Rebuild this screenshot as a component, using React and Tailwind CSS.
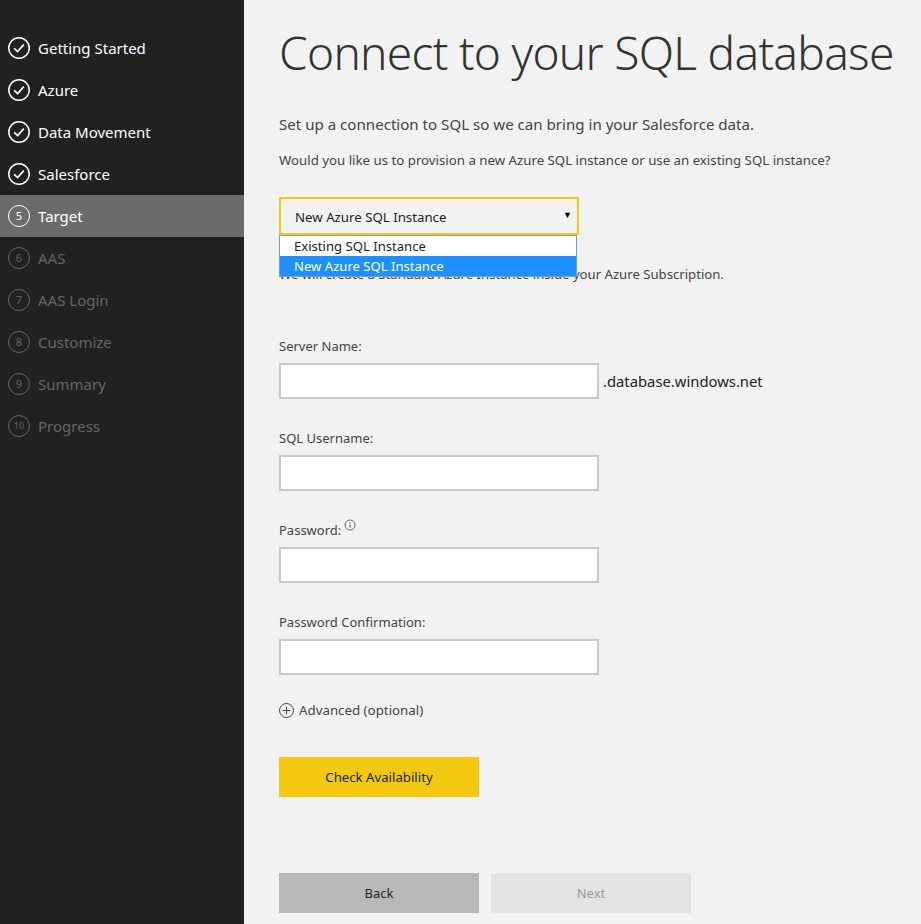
import { useState } from "react";

const DONE = ["Getting Started", "Azure", "Data Movement", "Salesforce"];
const TODO = ["AAS", "AAS Login", "Customize", "Summary", "Progress"];

function Check() {
  return (
    <svg width="22" height="22" viewBox="0 0 22 22" fill="none" stroke="white" className="shrink-0">
      <circle cx="11" cy="11" r="10.2" strokeWidth="1.5" />
      <path d="M6.2 11.4l3.4 3.2 6.2-7" strokeWidth="1.7" />
    </svg>
  );
}

function Step({ num, label, active, off }) {
  return (
    <div className={"h-[42px] pl-2 flex items-center gap-2 text-[15px] " + (active ? "bg-[#6b6b6b] text-white" : off ? "text-[#666666]" : "text-white")}>
      {num ? (
        <span className={"w-[22px] h-[22px] shrink-0 rounded-full border-[1.5px] flex items-center justify-center " + (num === 10 ? "text-[9px] " : "text-[11px] ") + (off ? "border-[#666666]" : "border-white")}>
          {num}
        </span>
      ) : (
        <Check />
      )}
      <span>{label}</span>
    </div>
  );
}

function Field({ label, info, children }) {
  return (
    <div>
      <div className="h-[20px] flex items-center text-[13px] text-[#444444] mb-[6px]">
        {label}
        {info && (
          <svg width="12" height="12" viewBox="0 0 12 12" fill="none" stroke="#444444" className="ml-[3px] -mt-3">
            <circle cx="6" cy="6" r="5" strokeWidth="0.8" />
            <path d="M6 5.2v3.4M6 3.2v1" strokeWidth="0.9" />
          </svg>
        )}
      </div>
      <div className="flex items-center">
        <input type="text" className="w-[320px] h-[36px] bg-white border-2 border-[#c8c8c8] outline-none" />
        {children}
      </div>
    </div>
  );
}

export default function App() {
  const [value] = useState("New Azure SQL Instance");

  return (
    <div className="flex h-[924px] w-[921px] overflow-hidden bg-[#f2f2f2] font-['Noto_Sans',sans-serif]">
      <aside className="w-[244px] shrink-0 bg-[#212121] pt-[27px]">
        {DONE.map((d) => (
          <Step key={d} label={d} />
        ))}
        <Step num={5} label="Target" active />
        {TODO.map((d, i) => (
          <Step key={d} num={i + 6} label={d} off />
        ))}
      </aside>

      <main className="flex-1 pl-[35px] text-[#444444]">
        <h1 className="mt-[21px] h-[62px] text-[46px] leading-[62px] tracking-[-0.7px] font-light whitespace-nowrap text-[#333333]">
          Connect to your SQL database
        </h1>
        <p className="mt-[29px] text-[15.1px] leading-[24px]">Set up a connection to SQL so we can bring in your Salesforce data.</p>
        <p className="mt-[14px] text-[13.25px] leading-[20px]">Would you like us to provision a new Azure SQL instance or use an existing SQL instance?</p>

        <div className="relative mt-[27px] w-[300px]">
          <div className="h-[38px] border-2 border-[#f2c811] flex items-center justify-between pt-[3px] pl-[14px] pr-[5px] text-[13.25px] text-[#222222]">
            <span>{value}</span>
            <span className="text-[9px] -mt-1.5 text-black">▼</span>
          </div>
          <div className="absolute left-0 top-[38px] w-[298px] h-[42px] border border-[#7a9cc6] bg-white text-[13.1px] leading-[20px] text-[#222222]">
            <div className="pl-[14px] h-[20px]">Existing SQL Instance</div>
            <div className="pl-[14px] h-[20px] bg-[#1e90ff] text-white">New Azure SQL Instance</div>
          </div>
        </div>

        <p className="mt-[29px] text-[13.15px] leading-[20px]">We will create a Standard Azure Instance inside your Azure Subscription.</p>

        <div className="mt-[53px] flex flex-col gap-[30px]">
          <Field label="Server Name:">
            <span className="ml-[4px] text-[14.8px] text-[#222222]">.database.windows.net</span>
          </Field>
          <Field label="SQL Username:" />
          <Field label="Password:" info />
          <Field label="Password Confirmation:" />
        </div>

        <div className="mt-[26px] flex items-center gap-[5px] text-[13.3px]">
          <svg width="15" height="15" viewBox="0 0 15 15" fill="none" stroke="#444444" strokeWidth="1">
            <circle cx="7.5" cy="7.5" r="7" />
            <path d="M7.5 3.5v8M3.5 7.5h8" />
          </svg>
          <span>Advanced (optional)</span>
        </div>

        <button className="mt-[36px] block w-[200px] h-[40px] pt-px bg-[#f2c811] text-[13.2px] text-[#222222]">Check Availability</button>

        <div className="mt-[76px] flex gap-[12px]">
          <button className="w-[200px] h-[40px] pt-px bg-[#b8b8b8] text-[13px] text-[#222222]">Back</button>
          <button className="w-[200px] h-[40px] pt-px bg-[#e4e4e4] text-[13px] text-[#999999]">Next</button>
        </div>
      </main>
    </div>
  );
}
